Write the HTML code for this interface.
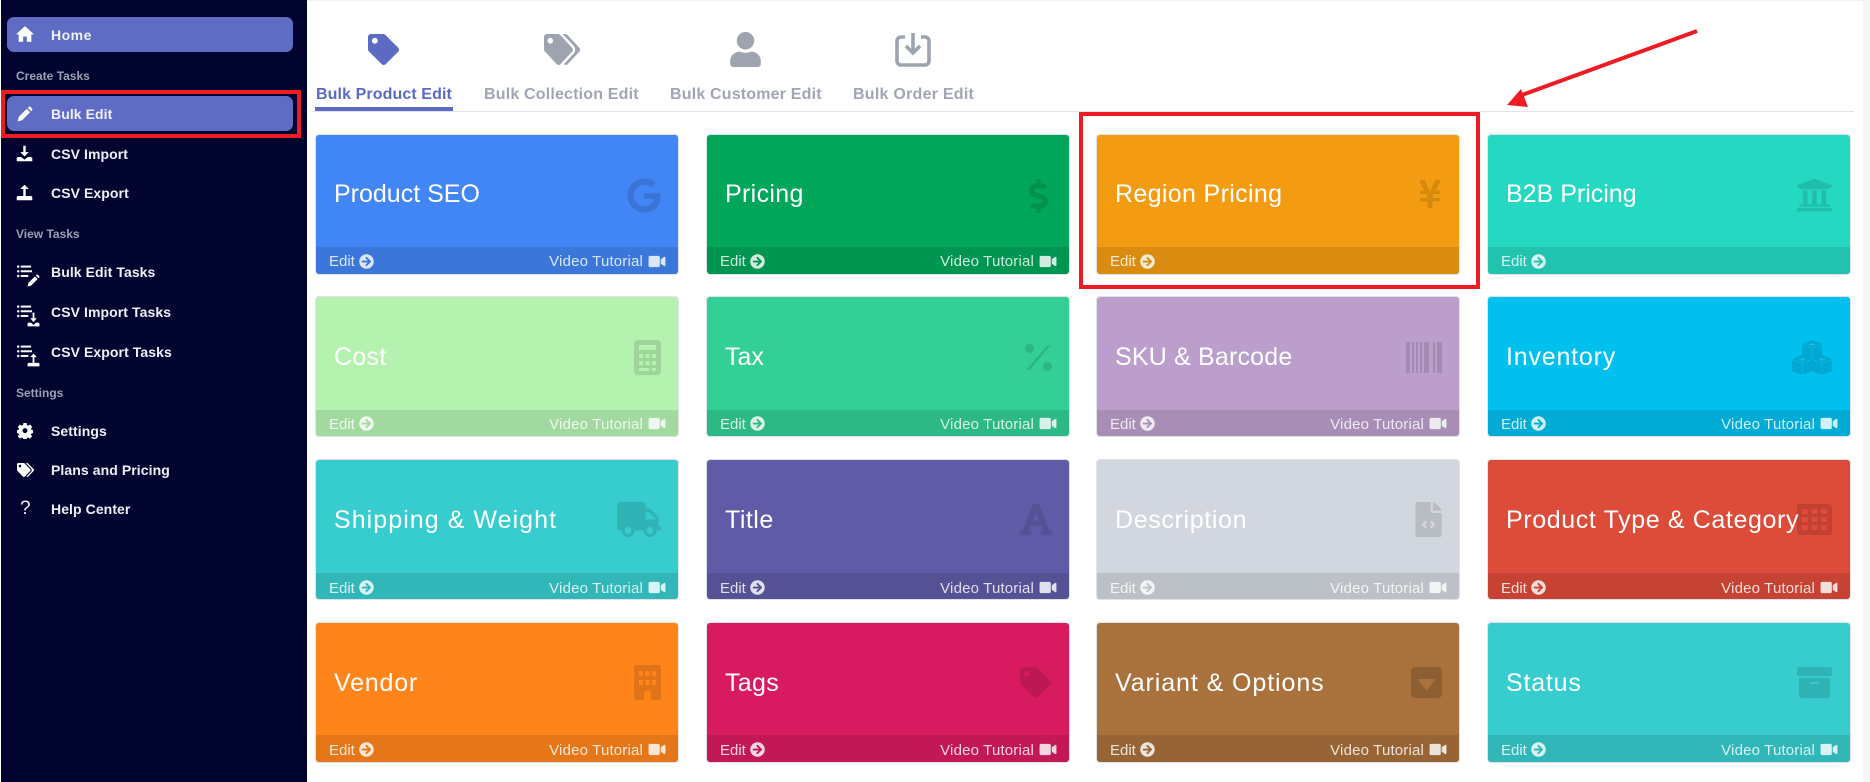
<!DOCTYPE html>
<html lang="en"><head><meta charset="utf-8"><title>Bulk Edit</title>
<style>
*{box-sizing:border-box}
html,body{margin:0;padding:0}
body{width:1870px;height:782px;overflow:hidden;background:#fff;font-family:"Liberation Sans",sans-serif;position:relative}
.side{position:absolute;left:1px;top:0;width:306px;height:782px;background:#00042e}
.gut{position:absolute;left:1863px;top:0;width:7px;height:782px;background:#f6f6f7}
.topl{position:absolute;left:307px;top:0;width:1556px;height:1px;background:#f1f1f2}
.pill{position:absolute;left:7px;width:286px;height:35px;background:#5f6cc4;border-radius:7px}
.it{position:absolute;left:51px;font-size:14px;font-weight:bold;color:#f0f1f8;line-height:20px;white-space:nowrap;letter-spacing:.08px}
.lb{position:absolute;left:16px;font-size:12px;font-weight:bold;color:#98a3b3;line-height:16px;white-space:nowrap}
.si{position:absolute;fill:#fff}
.tab{position:absolute;top:85px;font-size:16px;font-weight:bold;color:#a1a6b3;line-height:20px;white-space:nowrap;letter-spacing:.18px}
.ti{position:absolute;fill:#9ea3b0}
.card{position:absolute;width:362px;height:139px;border-radius:3px;box-shadow:0 0 0 1px #dfe3e8;overflow:hidden}
.t{position:absolute;left:18px;top:2px;line-height:116px;font-size:25px;color:#fff;white-space:nowrap;z-index:2}
.r1 .t{top:1px}
.f{position:absolute;left:0;right:0;bottom:0;height:27px;background:rgba(0,0,0,.1)}
.r2 .f,.r3 .f{height:26px}
.e{position:absolute;left:13px;top:5px;font-size:15px;line-height:20px;color:rgba(255,255,255,.82)}
.v{position:absolute;right:35px;top:5px;font-size:15px;line-height:20px;color:rgba(255,255,255,.82);white-space:nowrap;letter-spacing:.17px}
.a{position:absolute;left:43px;top:7px;width:15px;height:15px;fill:rgba(255,255,255,.82)}
.c{position:absolute;right:12px;top:7px;width:18px;height:15px;fill:rgba(255,255,255,.82)}
.r2 .a,.r2 .c{top:6px}
.r3 .e,.r3 .v,.r4 .e,.r4 .v{top:6px}
.ic{position:absolute;fill:rgba(0,0,0,.12)}
.red{position:absolute;border:4px solid #ed1c24}
</style></head><body>
<svg width="0" height="0" style="position:absolute">
<symbol id="arr" viewBox="0 0 512 512"><path d="M256 8c137 0 248 111 248 248S393 504 256 504 8 393 8 256 119 8 256 8zm-28.9 143.6l75.5 72.4H120c-13.3 0-24 10.7-24 24v16c0 13.3 10.7 24 24 24h182.6l-75.5 72.4c-9.7 9.3-9.9 24.8-.4 34.3l11 10.9c9.4 9.4 24.6 9.4 33.9 0L404.3 273c9.4-9.4 9.4-24.6 0-33.9L271.6 106.3c-9.4-9.4-24.6-9.4-33.9 0l-11 10.9c-9.5 9.6-9.3 25.1.4 34.4z"/></symbol>
<symbol id="cam" viewBox="0 0 576 512"><path d="M336.2 64H47.8C21.4 64 0 85.4 0 111.8v288.4C0 426.6 21.4 448 47.8 448h288.4c26.4 0 47.8-21.4 47.8-47.8V111.8c0-26.4-21.4-47.8-47.8-47.8zm189.4 37.7L416 177.3v157.4l109.6 75.5c21.2 14.6 50.4-.3 50.4-25.8V127.5c0-25.4-29.1-40.4-50.4-25.8z"/></symbol>
<symbol id="tag" viewBox="0 0 512 512"><path d="M0 252.118V48C0 21.49 21.49 0 48 0h204.118a48 48 0 0 1 33.941 14.059l211.882 211.882c18.745 18.745 18.745 49.137 0 67.882L293.823 497.941c-18.745 18.745-49.137 18.745-67.882 0L14.059 286.059A48 48 0 0 1 0 252.118zM112 64c-26.51 0-48 21.49-48 48s21.49 48 48 48 48-21.49 48-48-21.49-48-48-48z"/></symbol>
<symbol id="tags" viewBox="0 0 640 512" preserveAspectRatio="none"><path d="M497.941 225.941L286.059 14.059A48 48 0 0 0 252.118 0H48C21.49 0 0 21.49 0 48v204.118a48 48 0 0 0 14.059 33.941l211.882 211.882c18.745 18.745 49.137 18.745 67.882 0l204.118-204.118c18.745-18.745 18.745-49.137 0-67.882zM112 160c-26.51 0-48-21.49-48-48s21.49-48 48-48 48 21.49 48 48-21.49 48-48 48zm513.941 133.823L421.823 497.941c-18.745 18.745-49.137 18.745-67.882 0l-.36-.36L527.64 323.522c16.999-16.999 26.36-39.6 26.36-63.64s-9.362-46.641-26.36-63.64L331.397 0h48.721a48 48 0 0 1 33.941 14.059l211.882 211.882c18.745 18.745 18.745 49.137 0 67.882z"/></symbol>
<symbol id="list" viewBox="0 0 16 13"><rect x="0" y="0" width="2.600" height="2.600" rx="1.300"/><rect x="0" y="5" width="2.600" height="2.600" rx="1.300"/><rect x="0" y="10" width="2.600" height="2.600" rx="1.300"/><rect x="4" y=".2" width="11" height="2.100"/><rect x="4" y="5.200" width="12" height="2.100"/><rect x="4" y="10.200" width="8" height="2.100"/></symbol>
<symbol id="pen" viewBox="0 0 24 24"><path d="M1 23l1.600-6.600L14.600 4.400l5 5L7.600 21.400zM16.200 2.800l1.300-1.300a2 2 0 0 1 2.800 0l2.200 2.200a2 2 0 0 1 0 2.800l-1.300 1.300z"/></symbol>
<symbol id="imp" viewBox="0 0 24 24" preserveAspectRatio="none"><path d="M10.300 1h3.400v9h4.300l-6 6.200-6-6.200h4.300z"/><path d="M1 23v-4a2 2 0 0 1 2-2h4.200l4.800 3.600 4.800-3.600H21a2 2 0 0 1 2 2v4z"/></symbol>
<symbol id="exp" viewBox="0 0 24 24" preserveAspectRatio="none"><path d="M10.300 17V7H6l6-6 6 6h-4.300v10z"/><path d="M1 23v-4a2 2 0 0 1 2-2h18a2 2 0 0 1 2 2v4z"/></symbol>
</svg>

<div class="side"></div>
<div class="gut"></div>
<div class="topl"></div>

<div class="pill" style="top:17px"></div>
<div class="pill" style="top:96px"></div>

<svg class="si" style="left:16px;top:26px" width="18" height="16" viewBox="0 0 24 21"><path d="M12 0L0 11h3.500v10h6v-7h5v7h6V11H24z"/></svg>
<svg class="si" style="left:17px;top:106px" width="16" height="16"><use href="#pen"/></svg>
<svg class="si" style="left:16px;top:145px" width="17" height="17"><use href="#imp"/></svg>
<svg class="si" style="left:16px;top:184px" width="17" height="17"><use href="#exp"/></svg>
<svg class="si" style="left:17px;top:265px" width="15" height="13"><use href="#list"/></svg>
<svg class="si" style="left:27px;top:274px" width="13" height="13"><use href="#pen"/></svg>
<svg class="si" style="left:17px;top:305px" width="15" height="13"><use href="#list"/></svg>
<svg class="si" style="left:27px;top:312px" width="13" height="15"><use href="#imp"/></svg>
<svg class="si" style="left:17px;top:345px" width="15" height="13"><use href="#list"/></svg>
<svg class="si" style="left:27px;top:353px" width="13" height="14"><use href="#exp"/></svg>
<svg class="si" style="left:17px;top:423px" width="16" height="16" viewBox="0 0 16 16"><path fill-rule="evenodd" d="M6.300 0h3.400l.4 2.200 1.300.6 1.900-1.200 2.300 2.500-1.300 1.800.5 1.300 2 .4v3l-2 .4-.6 1.300 1.300 1.800-2.300 2.400-1.900-1.200-1.300.6-.4 2.200H6.300l-.4-2.200-1.300-.6-1.900 1.200-2.300-2.400 1.300-1.800-.5-1.300-2-.4v-3l2-.4.5-1.300L.4 4.100l2.300-2.500 1.900 1.200 1.300-.6zM8 5.400A2.600 2.600 0 1 0 8 10.600A2.600 2.600 0 1 0 8 5.400z" transform="translate(.4 0) scale(.95)"/></svg>
<svg class="si" style="left:17px;top:463px" width="17" height="14"><use href="#tags"/></svg>
<div class="it" style="left:20px;top:499px;font-size:19px;font-weight:normal">?</div>

<div class="it" style="top:25px;letter-spacing:.5px">Home</div>
<div class="lb" style="top:68px">Create Tasks</div>
<div class="it" style="top:104px">Bulk Edit</div>
<div class="it" style="top:144px">CSV Import</div>
<div class="it" style="top:183px">CSV Export</div>
<div class="lb" style="top:226px">View Tasks</div>
<div class="it" style="top:262px">Bulk Edit Tasks</div>
<div class="it" style="top:302px">CSV Import Tasks</div>
<div class="it" style="top:342px">CSV Export Tasks</div>
<div class="lb" style="top:385px">Settings</div>
<div class="it" style="top:421px">Settings</div>
<div class="it" style="top:460px">Plans and Pricing</div>
<div class="it" style="top:499px">Help Center</div>

<div class="red" style="left:1px;top:90px;width:300px;height:48px"></div>

<!-- tabs -->
<svg class="ti" style="left:368px;top:34px;fill:#5c6ac4" width="31" height="31"><use href="#tag"/></svg>
<svg class="ti" style="left:544px;top:34px" width="36" height="31"><use href="#tags"/></svg>
<svg class="ti" style="left:730px;top:32px" width="31" height="35" viewBox="0 0 448 512"><path d="M224 256c70.700 0 128-57.300 128-128S294.700 0 224 0 96 57.300 96 128s57.300 128 128 128zm89.600 32h-16.700c-22.200 10.200-46.900 16-72.900 16s-50.600-5.800-72.900-16h-16.700C60.200 288 0 348.200 0 422.400V464c0 26.500 21.500 48 48 48h352c26.500 0 48-21.500 48-48v-41.600c0-74.200-60.200-134.400-134.400-134.400z"/></svg>
<svg class="ti" style="left:895px;top:32px;fill:none;stroke:#9ea3b0" width="36" height="36" viewBox="0 0 36 36"><path d="M10 5H6a4 4 0 0 0-4 4v20a4 4 0 0 0 4 4h24a4 4 0 0 0 4-4V9a4 4 0 0 0-4-4h-4" stroke-width="3.600"/><path d="M18 1v20M11 14l7 7 7-7" stroke-width="3.600"/></svg>

<div class="tab" style="left:316px;color:#5c6ac4;letter-spacing:.1px">Bulk Product Edit</div>
<div class="tab" style="left:484px">Bulk Collection Edit</div>
<div class="tab" style="left:670px">Bulk Customer Edit</div>
<div class="tab" style="left:853px;letter-spacing:.25px">Bulk Order Edit</div>
<div style="position:absolute;left:315px;top:107px;width:138px;height:4px;background:#5c6ac4"></div>
<div style="position:absolute;left:311px;top:111px;width:1543px;height:1px;background:#e3e4e8"></div>

<!-- row 1 -->
<div class="card r1" style="left:316px;top:135px;background:#4285f4"><div class="t">Product SEO</div>
<svg class="ic" style="left:311px;top:43px" width="34" height="35" viewBox="0 0 488 512"><path d="M488 261.800C488 403.300 391.100 504 248 504 110.800 504 0 393.200 0 256S110.800 8 248 8c66.800 0 123 24.500 166.300 64.900l-67.500 64.900C258.500 52.600 94.300 116.600 94.300 256c0 86.500 69.100 156.600 153.700 156.600 98.200 0 135-70.400 140.800-106.900H248v-85.300h236.100c2.300 12.700 3.900 24.900 3.900 41.400z"/></svg>
<div class="f"><span class="e">Edit</span><svg class="a"><use href="#arr"/></svg><span class="v">Video Tutorial</span><svg class="c"><use href="#cam"/></svg></div></div>

<div class="card r1" style="left:707px;top:135px;background:#00a65a"><div class="t" style="letter-spacing:.34px">Pricing</div>
<svg class="ic" style="left:321px;top:44px" width="21" height="34" viewBox="0 0 288 512"><path d="M209.200 233.400l-108-31.600C88.700 198.200 80 186.500 80 173.500c0-16.300 13.200-29.500 29.500-29.500h66.300c12.200 0 24.200 3.700 34.200 10.500 6.100 4.100 14.300 3.100 19.500-2l34.800-34c7.100-6.900 6.100-18.400-1.800-24.500C238 74.800 207.400 64.100 176 64V16c0-8.800-7.200-16-16-16h-32c-8.800 0-16 7.200-16 16v48h-2.500C45.800 64-5.400 118.700.5 183.600c4.200 46.100 39.400 83.600 83.800 96.600l102.500 30c12.500 3.700 21.200 15.300 21.200 28.300 0 16.300-13.200 29.500-29.500 29.500h-66.300C100 368 88 364.300 78 357.500c-6.100-4.100-14.300-3.100-19.500 2l-34.800 34c-7.100 6.900-6.100 18.400 1.800 24.500 24.500 19.200 55.100 29.900 86.500 30v48c0 8.800 7.200 16 16 16h32c8.800 0 16-7.200 16-16v-48.200c46.600-.9 90.300-28.600 105.700-72.700 21.500-61.600-14.600-124.800-72.500-141.700z"/></svg>
<div class="f"><span class="e">Edit</span><svg class="a"><use href="#arr"/></svg><span class="v">Video Tutorial</span><svg class="c"><use href="#cam"/></svg></div></div>

<div class="card r1" style="left:1097px;top:135px;background:#f39c12"><div class="t" style="letter-spacing:.34px">Region Pricing</div>
<svg class="ic" style="left:321px;top:43px" width="24" height="32" viewBox="0 0 384 512"><path d="M351.200 32h-65.300c-4.600 0-8.800 2.600-10.800 6.700l-55.400 113.200c-14.500 34.700-27.100 71.900-27.100 71.900h-1.300s-12.600-37.200-27.100-71.900L108.800 38.700c-2-4.100-6.200-6.700-10.800-6.700H32.800c-9.100 0-14.800 9.700-10.600 17.600L102.300 200H44c-6.600 0-12 5.400-12 12v32c0 6.600 5.400 12 12 12h88.200l19.800 37.200V320H44c-6.600 0-12 5.400-12 12v32c0 6.600 5.400 12 12 12h108v92c0 6.600 5.400 12 12 12h56c6.600 0 12-5.400 12-12v-92h108c6.600 0 12-5.400 12-12v-32c0-6.600-5.400-12-12-12H232v-26.800l19.800-37.200H340c6.600 0 12-5.400 12-12v-32c0-6.600-5.400-12-12-12h-58.300l80.100-150.400c4.200-7.900-1.500-17.600-10.600-17.600z"/></svg>
<div class="f"><span class="e">Edit</span><svg class="a"><use href="#arr"/></svg></div></div>

<div class="card r1" style="left:1488px;top:135px;background:#25d8c2"><div class="t">B2B Pricing</div>
<svg class="ic" style="left:309px;top:42px" width="35" height="36" viewBox="16 32 480 448"><path d="M496 128v16a8 8 0 0 1-8 8h-24v12c0 6.627-5.373 12-12 12H60c-6.627 0-12-5.373-12-12v-12H24a8 8 0 0 1-8-8v-16a8 8 0 0 1 4.941-7.392l232-88a7.996 7.996 0 0 1 6.118 0l232 88A8 8 0 0 1 496 128zm-24 304H40c-13.255 0-24 10.745-24 24v16a8 8 0 0 0 8 8h464a8 8 0 0 0 8-8v-16c0-13.255-10.745-24-24-24zM96 192v192H60c-6.627 0-12 5.373-12 12v20h416v-20c0-6.627-5.373-12-12-12h-36V192h-64v192h-64V192h-64v192h-64V192H96z"/></svg>
<div class="f"><span class="e">Edit</span><svg class="a"><use href="#arr"/></svg></div></div>

<!-- row 2 -->
<div class="card r2" style="left:316px;top:297px;background:#b5f2b0"><div class="t" style="letter-spacing:.3px">Cost</div>
<svg class="ic" style="left:318px;top:43px" width="27" height="35" viewBox="0 0 27 35"><path fill-rule="evenodd" d="M4 0h19a4 4 0 0 1 4 4v27a4 4 0 0 1-4 4H4a4 4 0 0 1-4-4V4a4 4 0 0 1 4-4zM5 5v5h17V5zM5 14v4h4v-4zM11.500 14v4h4v-4zM18 14v4h4v-4zM5 21v4h4v-4zM11.500 21v4h4v-4zM18 21v4h4v-4zM5 28v3h10v-3zM18 28v3h4v-3z"/></svg>
<div class="f"><span class="e">Edit</span><svg class="a"><use href="#arr"/></svg><span class="v">Video Tutorial</span><svg class="c"><use href="#cam"/></svg></div></div>

<div class="card r2" style="left:707px;top:297px;background:#33cf96"><div class="t">Tax</div>
<svg class="ic" style="left:318px;top:47px" width="27" height="27" viewBox="0 0 27 27"><circle cx="4.500" cy="4.500" r="4.500"/><circle cx="22.500" cy="22.500" r="4.500"/><path d="M22 1.500h3.500L5 25.500H1.500z"/></svg>
<div class="f"><span class="e">Edit</span><svg class="a"><use href="#arr"/></svg><span class="v">Video Tutorial</span><svg class="c"><use href="#cam"/></svg></div></div>

<div class="card r2" style="left:1097px;top:297px;background:#bb9ecb"><div class="t" style="letter-spacing:.18px">SKU &amp; Barcode</div>
<svg class="ic" style="left:309px;top:45px" width="36" height="31" viewBox="0 0 36 31"><rect x="0" width="4" height="31"/><rect x="6" width="2" height="31"/><rect x="10" width="2" height="31"/><rect x="14" width="2" height="31"/><rect x="18" width="5" height="31"/><rect x="27" width="2" height="31"/><rect x="31" width="5" height="31"/></svg>
<div class="f"><span class="e">Edit</span><svg class="a"><use href="#arr"/></svg><span class="v">Video Tutorial</span><svg class="c"><use href="#cam"/></svg></div></div>

<div class="card r2" style="left:1488px;top:297px;background:#00c0ef"><div class="t" style="letter-spacing:.8px">Inventory</div>
<svg style="position:absolute;left:304px;top:43px" width="40" height="35" viewBox="0 0 40 35"><path d="M20 0l10 4v12l-10 4-10-4V4z" fill="#00a7d0"/><path d="M10 15l10 4v12l-10 4-10-4V19zM30 15l10 4v12l-10 4-10-4V19z" fill="#00a7d0"/><path d="M10.500 4.500L20 8.300l9.500-3.800M20 8.300v11M.5 19.500l9.500 3.800 9.500-3.800M10 23.300v11M20.500 19.500l9.500 3.800 9.500-3.800M30 23.300v11" stroke="#00c0ef" stroke-width=".8" fill="none"/><path d="M20 3l4 1.500-4 1.500-4-1.500zM10 18l4 1.500-4 1.500-4-1.500zM30 18l4 1.500-4 1.500-4-1.500z" fill="#1db8e0"/></svg>
<div class="f"><span class="e">Edit</span><svg class="a"><use href="#arr"/></svg><span class="v">Video Tutorial</span><svg class="c"><use href="#cam"/></svg></div></div>

<!-- row 3 -->
<div class="card r3" style="left:316px;top:460px;background:#37cccd"><div class="t" style="letter-spacing:1.05px">Shipping &amp; Weight</div>
<svg class="ic" style="left:301px;top:42px" width="44" height="35" viewBox="0 0 640 512"><path d="M624 352h-16V243.900c0-12.700-5.100-24.900-14.100-33.900L494 110.100c-9-9-21.200-14.100-33.900-14.100H416V48c0-26.500-21.500-48-48-48H48C21.500 0 0 21.500 0 48v320c0 26.500 21.500 48 48 48h16c0 53 43 96 96 96s96-43 96-96h128c0 53 43 96 96 96s96-43 96-96h48c8.800 0 16-7.200 16-16v-32c0-8.800-7.200-16-16-16zM160 464c-26.500 0-48-21.500-48-48s21.500-48 48-48 48 21.500 48 48-21.500 48-48 48zm320 0c-26.500 0-48-21.500-48-48s21.500-48 48-48 48 21.500 48 48-21.500 48-48 48zm80-208H416V144h44.100l99.900 99.900V256z"/></svg>
<div class="f"><span class="e">Edit</span><svg class="a"><use href="#arr"/></svg><span class="v">Video Tutorial</span><svg class="c"><use href="#cam"/></svg></div></div>

<div class="card r3" style="left:707px;top:460px;background:#5f5ba6"><div class="t" style="letter-spacing:.48px">Title</div>
<svg class="ic" style="left:313px;top:44px;fill:rgba(0,0,0,.1)" width="32" height="31" viewBox="0 32 448 448" preserveAspectRatio="none"><path d="M432 416h-23.410L277.880 53.690A32 32 0 0 0 247.580 32h-47.160a32 32 0 0 0-30.300 21.690L39.410 416H16a16 16 0 0 0-16 16v32a16 16 0 0 0 16 16h128a16 16 0 0 0 16-16v-32a16 16 0 0 0-16-16h-19.580l23.300-64h152.560l23.300 64H304a16 16 0 0 0-16 16v32a16 16 0 0 0 16 16h128a16 16 0 0 0 16-16v-32a16 16 0 0 0-16-16zM176.850 272L224 142.510 271.150 272z"/></svg>
<div class="f"><span class="e">Edit</span><svg class="a"><use href="#arr"/></svg><span class="v">Video Tutorial</span><svg class="c"><use href="#cam"/></svg></div></div>

<div class="card r3" style="left:1097px;top:460px;background:#d2d6de"><div class="t" style="letter-spacing:.65px">Description</div>
<svg class="ic" style="left:318px;top:42px" width="27" height="35" viewBox="0 0 384 512"><path fill-rule="evenodd" d="M384 121.941V128H256V0h6.059c6.365 0 12.470 2.529 16.970 7.029l97.941 97.941A24.005 24.005 0 0 1 384 121.941zM248 160c-13.200 0-24-10.800-24-24V0H24C10.745 0 0 10.745 0 24v464c0 13.255 10.745 24 24 24h336c13.255 0 24-10.745 24-24V160zM150 270l-60 60 60 60 24-24-36-36 36-36zM234 270l-24 24 36 36-36 36 24 24 60-60z"/></svg>
<div class="f"><span class="e">Edit</span><svg class="a"><use href="#arr"/></svg><span class="v">Video Tutorial</span><svg class="c"><use href="#cam"/></svg></div></div>

<div class="card r3" style="left:1488px;top:460px;background:#dd4b39"><div class="t" style="letter-spacing:.62px">Product Type &amp; Category</div>
<svg class="ic" style="left:309px;top:44px;fill:rgba(0,0,0,.12)" width="35" height="31" viewBox="0 0 35 31"><path fill-rule="evenodd" d="M3 0h29a3 3 0 0 1 3 3v25a3 3 0 0 1-3 3H3a3 3 0 0 1-3-3V3a3 3 0 0 1 3-3zM5 5v5h6V5zM14.500 5v5h6V5zM24 5v5h6V5zM5 13v5h6v-5zM14.500 13v5h6v-5zM24 13v5h6v-5zM5 21v5h6v-5zM14.500 21v5h6v-5zM24 21v5h6v-5z"/></svg>
<div class="f"><span class="e">Edit</span><svg class="a"><use href="#arr"/></svg><span class="v">Video Tutorial</span><svg class="c"><use href="#cam"/></svg></div></div>

<!-- row 4 -->
<div class="card r4" style="left:316px;top:623px;background:#ff851b"><div class="t" style="letter-spacing:.8px">Vendor</div>
<svg class="ic" style="left:318px;top:42px" width="27" height="35" viewBox="0 0 27 35"><path fill-rule="evenodd" d="M2 0h23a2 2 0 0 1 2 2v31a2 2 0 0 1-2 2h-8v-6a3.500 3.500 0 0 0-7 0v6H2a2 2 0 0 1-2-2V2a2 2 0 0 1 2-2zM5 6v5h4V6zM11.500 6v5h4V6zM18 6v5h4V6zM5 15v5h4v-5zM11.500 15v5h4v-5zM18 15v5h4v-5z"/></svg>
<div class="f"><span class="e">Edit</span><svg class="a"><use href="#arr"/></svg><span class="v">Video Tutorial</span><svg class="c"><use href="#cam"/></svg></div></div>

<div class="card r4" style="left:707px;top:623px;background:#d81b60"><div class="t" style="letter-spacing:.3px">Tags</div>
<svg class="ic" style="left:313px;top:44px" width="31" height="31"><use href="#tag"/></svg>
<div class="f"><span class="e">Edit</span><svg class="a"><use href="#arr"/></svg><span class="v">Video Tutorial</span><svg class="c"><use href="#cam"/></svg></div></div>

<div class="card r4" style="left:1097px;top:623px;background:#a9713b"><div class="t" style="letter-spacing:.91px">Variant &amp; Options</div>
<svg class="ic" style="left:314px;top:44px;fill:rgba(0,0,0,.16)" width="31" height="31" viewBox="0 0 31 31"><path fill-rule="evenodd" d="M4 0h23a4 4 0 0 1 4 4v23a4 4 0 0 1-4 4H4a4 4 0 0 1-4-4V4a4 4 0 0 1 4-4zM6.500 12l9 12 9-12z"/></svg>
<div class="f"><span class="e">Edit</span><svg class="a"><use href="#arr"/></svg><span class="v">Video Tutorial</span><svg class="c"><use href="#cam"/></svg></div></div>

<div class="card r4" style="left:1488px;top:623px;background:#37cccd"><div class="t" style="letter-spacing:.8px">Status</div>
<svg class="ic" style="left:309px;top:44px" width="35" height="31" viewBox="0 0 35 31"><rect x="0" y="0" width="35" height="9" rx="2"/><path fill-rule="evenodd" d="M2 11h31v17a3 3 0 0 1-3 3H5a3 3 0 0 1-3-3zM13 15v2h9v-2z"/></svg>
<div class="f"><span class="e">Edit</span><svg class="a"><use href="#arr"/></svg><span class="v">Video Tutorial</span><svg class="c"><use href="#cam"/></svg></div></div>

<!-- annotations -->
<div class="red" style="left:1079px;top:112px;width:401px;height:177px"></div>
<svg style="position:absolute;left:1500px;top:25px" width="205" height="90"><path d="M197 6L22 70" stroke="#ed1c24" stroke-width="4" fill="none"/><polygon points="7,80 21,64 28,82" fill="#ed1c24"/></svg>
</body></html>
